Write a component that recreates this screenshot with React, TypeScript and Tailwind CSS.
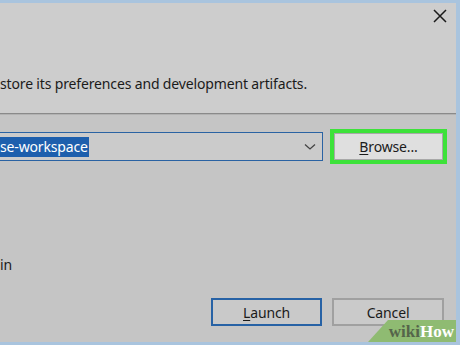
export default function App() {
  return (
    <div
      className="w-[460px] h-[345px] relative overflow-hidden bg-[#a9c4de] pt-[3px] pr-[4px] pb-[3px] text-[#1b1b1b]"
      style={{ fontFamily: '"Noto Sans", "Open Sans", sans-serif' }}
    >
      <div className="h-full flex flex-col">
        <div className="h-[110px] bg-[#cdcdcd] flex flex-col">
          <div className="flex justify-end pt-[5px] pr-[8px]">
            <svg width="16" height="16" viewBox="0 0 16 16">
              <path d="M2 2 L14 14 M14 2 L2 14" stroke="#1a1a1a" strokeWidth="1.5" fill="none" />
            </svg>
          </div>
          <div className="mt-[50px] text-[14px] tracking-[-0.15px] leading-[20px] whitespace-nowrap">
            store its preferences and development artifacts.
          </div>
        </div>
        <div className="h-[1px] bg-[#8a8a8a]" />
        <div className="h-[1px] bg-[#b2b2b2]" />
        <div className="flex-1 bg-[#c5c5c5] flex flex-col text-[14px] tracking-[-0.15px]">
          <div className="mt-[14px] flex items-center h-[35px]">
            <div className="w-[323px] h-[29px] border border-l-0 border-[#2a63a3] bg-[#cbcbcb] flex items-center">
              <span className="bg-[#1d5fad] text-white leading-[20px] pr-[1px]">se-workspace</span>
              <div className="flex-1" />
              <svg width="12" height="8" viewBox="0 0 12 8" className="mr-[6px]">
                <path d="M1 1.5 L6 6 L11 1.5" stroke="#444" strokeWidth="1.3" fill="none" />
              </svg>
            </div>
            <div className="ml-[7px] w-[117px] h-[35px] border-[4px] border-[#3de23a] flex">
              <div className="flex-1 border border-[#a8a8a8] bg-[#dfdfdf] flex items-center justify-center">
                <span><span className="underline underline-offset-2">B</span>rowse...</span>
              </div>
            </div>
          </div>
          <div className="mt-[91px] leading-[20px]">in</div>
          <div className="mt-[23px] flex justify-end gap-[10px] pr-[12px]">
            <div className="w-[111px] h-[28px] border-2 border-[#2762a5] bg-[#c9c9c9] flex items-center justify-center">
              <span><span className="underline underline-offset-2">L</span>aunch</span>
            </div>
            <div className="w-[112px] h-[28px] border-2 border-[#a0a0a0] bg-[#cacaca] flex items-center justify-center">
              Cancel
            </div>
          </div>
        </div>
      </div>
      <div
        className="absolute right-[4px] bottom-[3px] w-[88px] h-[22px] bg-[#8fbb72] flex items-center justify-end pr-[2px]"
        style={{ clipPath: 'polygon(20px 0, 100% 0, 100% 100%, 0 100%)' }}
      >
        <span className="text-[17px] font-bold leading-none" style={{ fontFamily: '"Liberation Serif", serif' }}>
          <span className="text-[#55654a]">wiki</span>
          <span className="text-white">How</span>
        </span>
      </div>
    </div>
  );
}
